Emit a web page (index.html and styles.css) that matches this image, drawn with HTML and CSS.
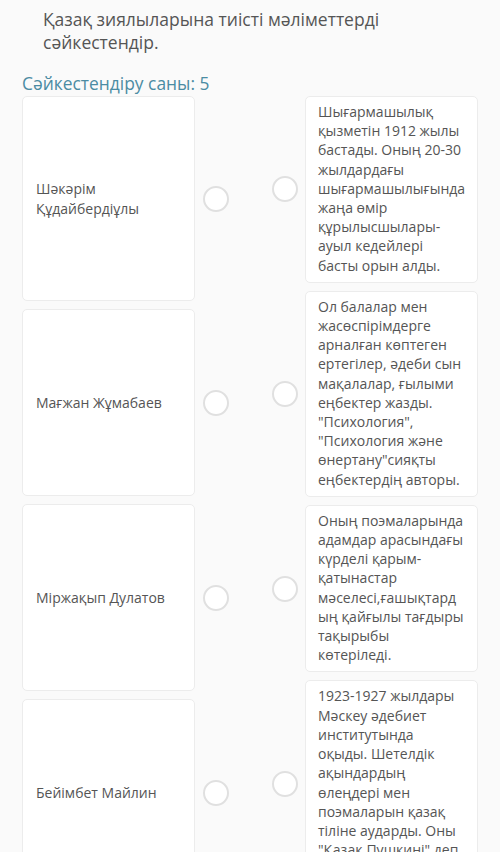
FILE: index.html
```html
<!DOCTYPE html>
<html lang="kk">
<head>
  <meta charset="UTF-8">
  <meta name="viewport" content="width=device-width, initial-scale=1.0">
  <title>Сәйкестендіру</title>
  <link rel="stylesheet" href="styles.css">
</head>
<body>
  <div class="question">
    <p class="question-text">Қазақ зиялыларына тиісті мәліметтерді сәйкестендір.</p>
    <h2 class="match-count">Сәйкестендіру саны: 5</h2>

    <div class="matcher">
      <!-- Сол жақ баған: есімдер -->
      <div class="column column-left">
        <div class="item">
          <div class="card card-tall">Шәкәрім Құдайбердіұлы</div>
          <span class="dot"></span>
        </div>
        <div class="item">
          <div class="card card-mid">Мағжан Жұмабаев</div>
          <span class="dot"></span>
        </div>
        <div class="item">
          <div class="card card-mid">Міржақып Дулатов</div>
          <span class="dot"></span>
        </div>
        <div class="item">
          <div class="card card-mid">Бейімбет Майлин</div>
          <span class="dot"></span>
        </div>
      </div>

      <!-- Оң жақ баған: мәліметтер -->
      <div class="column column-right">
        <div class="item">
          <span class="dot"></span>
          <div class="card">Шығармашылық қызметін 1912 жылы бастады. Оның 20-30 жылдардағы шығармашылығында жаңа өмір құрылысшылары-ауыл кедейлері басты орын алды.</div>
        </div>
        <div class="item">
          <span class="dot"></span>
          <div class="card">Ол балалар мен жасөспірімдерге арналған көптеген ертегілер, әдеби сын мақалалар, ғылыми еңбектер жазды. "Психология", "Психология және өнертану"сияқты еңбектердің авторы.</div>
        </div>
        <div class="item">
          <span class="dot"></span>
          <div class="card">Оның поэмаларында адамдар арасындағы күрделі қарым-қатынастар мәселесі,ғашықтардың қайғылы тағдыры тақырыбы көтеріледі.</div>
        </div>
        <div class="item">
          <span class="dot"></span>
          <div class="card">1923-1927 жылдары Мәскеу әдебиет институтында оқыды. Шетелдік ақындардың өлеңдері мен поэмаларын қазақ тіліне аударды. Оны "Қазақ Пушкині" деп атаған.</div>
        </div>
      </div>
    </div>
  </div>
</body>
</html>
```

FILE: styles.css
```css
/* Сәйкестендіру тапсырмасы */
body {
  margin: 0;
  background-color: #fafafa;
  font-family: 'Open Sans', 'Noto Sans', sans-serif;
  color: #555;
}

.question {
  padding: 8px 22px 0;
}

.question-text {
  margin: 0 0 0 21px;
  font-size: 17.5px;
  line-height: 23px;
  color: #555;
}

.match-count {
  margin: 18px 0 2px;
  font-size: 17.4px;
  line-height: 22px;
  font-weight: normal;
  color: #4b8ca3;
}

.matcher {
  display: flex;
  justify-content: space-between;
}

.column {
  display: flex;
  flex-direction: column;
  gap: 8px;
}

.item {
  display: flex;
  align-items: center;
  gap: 8px;
}

.column-right .item {
  gap: 7px;
}

.card {
  box-sizing: border-box;
  width: 173px;
  padding: 5px 11.5px 7px 12px;
  background-color: #fff;
  border: 1px solid #ececec;
  border-radius: 5px;
  font-size: 14px;
  line-height: 19.2px;
  color: #555;
  overflow-wrap: break-word;
}

.column-left .card {
  display: flex;
  align-items: center;
  padding: 6px 13px;
}

.card-tall {
  height: 205px;
}

.card-mid {
  height: 187px;
}

.dot {
  flex: none;
  box-sizing: border-box;
  width: 26px;
  height: 26px;
  border: 2px solid #e0e0e0;
  border-radius: 50%;
  background-color: #fff;
}
```
